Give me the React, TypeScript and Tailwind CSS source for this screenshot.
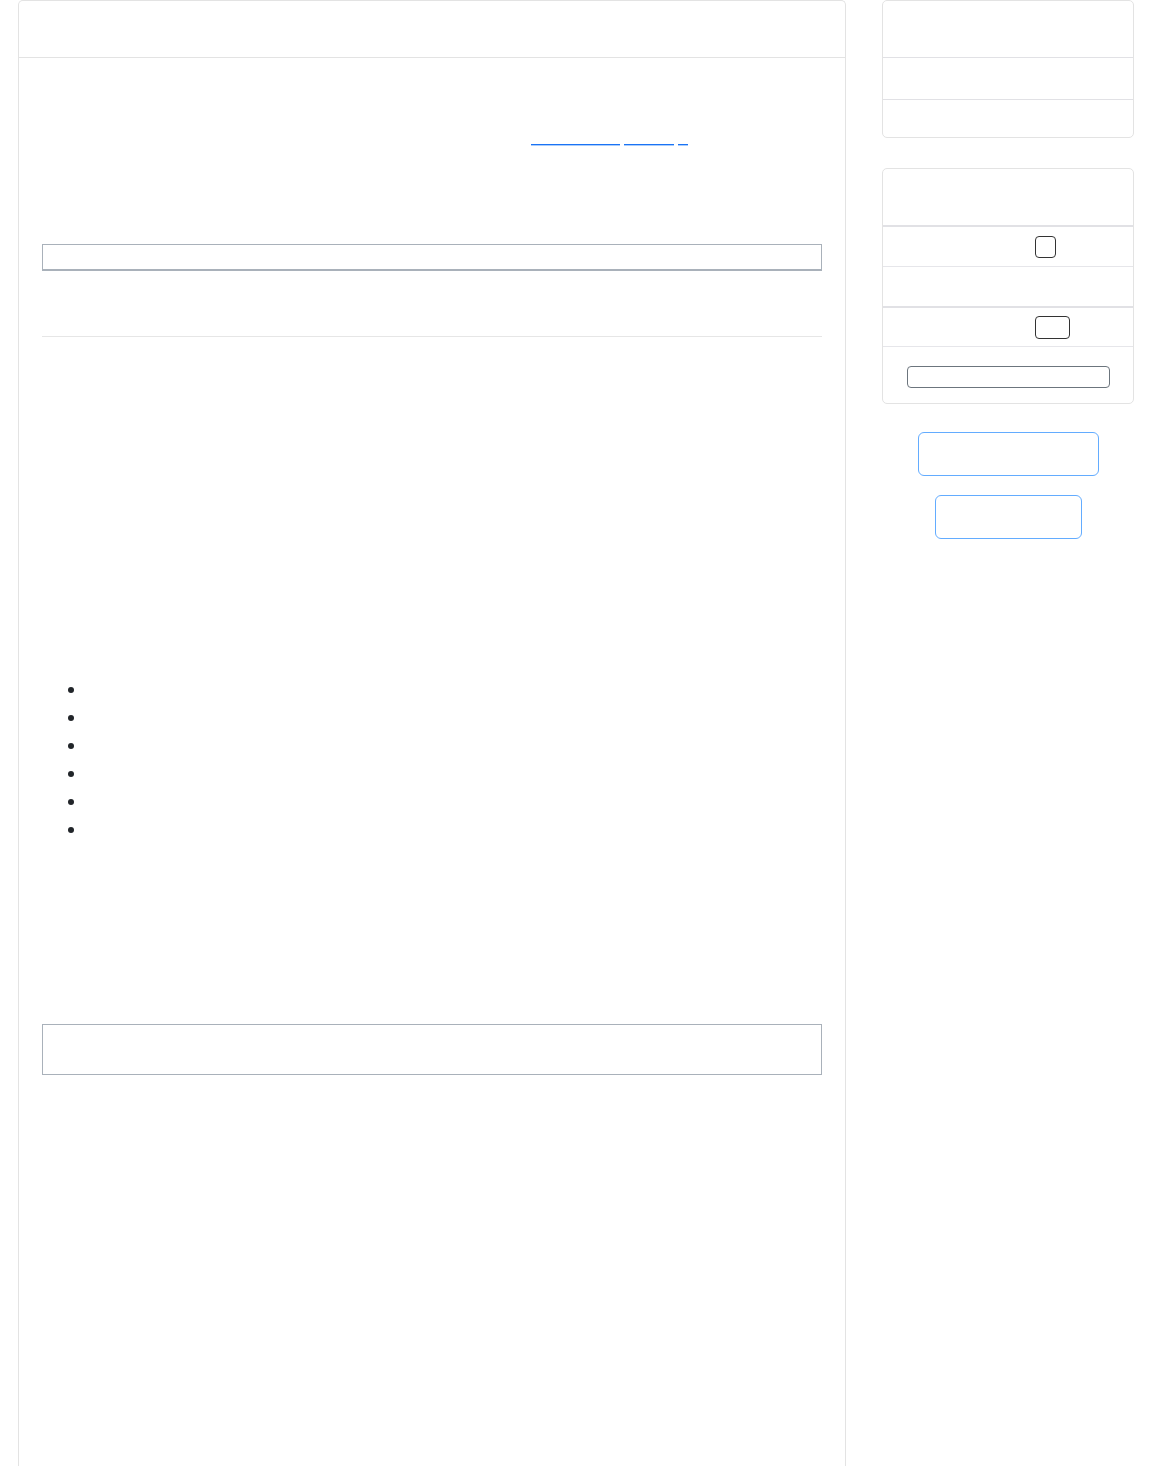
import React from "react";

export default function App() {
  const bullets = [0, 1, 2, 3, 4, 5];
  return (
    <div className="min-h-[1466px] bg-white px-[18px] font-['Liberation_Sans',sans-serif]">
      <div className="flex items-start gap-[36px]">
        {/* Main card */}
        <div className="w-[828px] min-h-[1500px] rounded-t-[5px] border border-b-0 border-[#e3e3e3] bg-white">
          <div className="h-[57px] border-b border-[#e3e3e3]" />
          <div className="flex flex-col px-[23px]">
            <div className="h-[86px]" />
            <div className="flex h-[2px] pl-[489px]">
              <div className="w-[89px] border-t border-b border-t-[#1a73f5] border-b-[#a9ccfb]" />
              <div className="ml-[4px] w-[50px] border-t border-b border-t-[#1a73f5] border-b-[#a9ccfb]" />
              <div className="ml-[4px] w-[10px] border-t border-b border-t-[#1a73f5] border-b-[#a9ccfb]" />
            </div>
            <div className="h-[98px]" />
            <div className="h-[27px] border border-b-2 border-[#a9b1ba]" />
            <div className="h-[65px]" />
            <div className="border-t border-[#e6e6e6]" />
            <div className="h-[339px]" />
            <ul className="flex flex-col">
              {bullets.map((b) => (
                <li key={b} className="flex h-[28px] items-center pl-[26px]">
                  <span className="block h-[6px] w-[6px] rounded-full bg-[#212529]" />
                </li>
              ))}
            </ul>
            <div className="h-[180px]" />
            <div className="h-[51px] border border-[#a9b1ba]" />
          </div>
        </div>

        {/* Sidebar */}
        <div className="flex w-[252px] flex-col">
          <div className="rounded-[5px] border border-[#e3e3e3]">
            <div className="h-[57px] border-b border-[#e1e1e5]" />
            <div className="h-[42px] border-b border-[#e1e1e5]" />
            <div className="h-[37px]" />
          </div>
          <div className="mt-[30px] rounded-[5px] border border-[#e3e3e3]">
            <div className="h-[58px] border-b-2 border-[#e1e1e5]" />
            <div className="flex h-[40px] items-center border-b border-[#e6e6ea] pl-[152px]">
              <div className="h-[22px] w-[21px] rounded-[4px] border border-[#333]" />
            </div>
            <div className="h-[41px] border-b-2 border-[#e1e1e5]" />
            <div className="flex h-[39px] items-center border-b border-[#e6e6ea] pl-[152px]">
              <div className="h-[23px] w-[35px] rounded-[4px] border border-[#333]" />
            </div>
            <div className="flex h-[56px] items-start justify-center pt-[19px]">
              <div className="h-[22px] w-[203px] rounded-[4px] border border-[#6c757d]" />
            </div>
          </div>
          <div className="mt-[28px] flex flex-col items-center gap-[19px]">
            <div className="h-[44px] w-[181px] rounded-[6px] border border-[#63acff]" />
            <div className="h-[44px] w-[147px] rounded-[6px] border border-[#63acff]" />
          </div>
        </div>
      </div>
    </div>
  );
}
